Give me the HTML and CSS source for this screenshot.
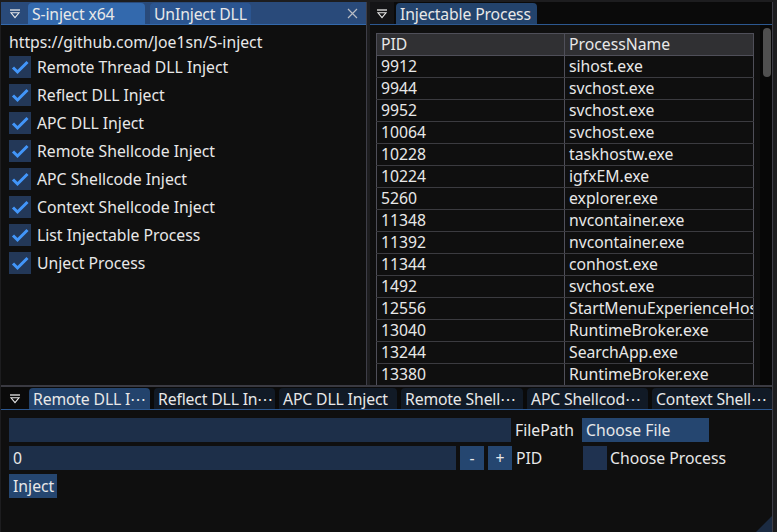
FILE: index.html
```html
<!DOCTYPE html>
<html>
<head>
<meta charset="utf-8">
<link rel="stylesheet" href="styles.css">
</head>
<body>
<div class="screen">
  <div class="top">
    <section class="win win-left">
      <div class="tabbar focused">
        <span class="menu-btn"><svg width="12" height="10" viewBox="0 0 12 10"><line x1="1" y1="1" x2="11" y2="1" stroke="#e8e8e8" stroke-width="1.3"/><polygon points="2,3.8 10,3.8 6,8.6" fill="none" stroke="#e8e8e8" stroke-width="1.1"/></svg></span>
        <span class="tab tab-active t-sinject">S-inject x64</span>
        <span class="tab tab-focused t-uninject">UnInject DLL</span>
        <span class="close"><svg width="11" height="11" viewBox="0 0 11 11"><path d="M1 1 L10 10 M10 1 L1 10" stroke="#b8bcc4" stroke-width="1.2"/></svg></span>
      </div>
      <div class="left-content">
        <div class="url">https://github.com/Joe1sn/S-inject</div>
        <div class="check"><span class="box"><svg width="22" height="22" viewBox="0 0 22 22"><polyline points="4,11.5 8.5,16 18.5,6" fill="none" stroke="#4296fa" stroke-width="3"/></svg></span><span>Remote Thread DLL Inject</span></div>
        <div class="check"><span class="box"><svg width="22" height="22" viewBox="0 0 22 22"><polyline points="4,11.5 8.5,16 18.5,6" fill="none" stroke="#4296fa" stroke-width="3"/></svg></span><span>Reflect DLL Inject</span></div>
        <div class="check"><span class="box"><svg width="22" height="22" viewBox="0 0 22 22"><polyline points="4,11.5 8.5,16 18.5,6" fill="none" stroke="#4296fa" stroke-width="3"/></svg></span><span>APC DLL Inject</span></div>
        <div class="check"><span class="box"><svg width="22" height="22" viewBox="0 0 22 22"><polyline points="4,11.5 8.5,16 18.5,6" fill="none" stroke="#4296fa" stroke-width="3"/></svg></span><span>Remote Shellcode Inject</span></div>
        <div class="check"><span class="box"><svg width="22" height="22" viewBox="0 0 22 22"><polyline points="4,11.5 8.5,16 18.5,6" fill="none" stroke="#4296fa" stroke-width="3"/></svg></span><span>APC Shellcode Inject</span></div>
        <div class="check"><span class="box"><svg width="22" height="22" viewBox="0 0 22 22"><polyline points="4,11.5 8.5,16 18.5,6" fill="none" stroke="#4296fa" stroke-width="3"/></svg></span><span>Context Shellcode Inject</span></div>
        <div class="check"><span class="box"><svg width="22" height="22" viewBox="0 0 22 22"><polyline points="4,11.5 8.5,16 18.5,6" fill="none" stroke="#4296fa" stroke-width="3"/></svg></span><span>List Injectable Process</span></div>
        <div class="check"><span class="box"><svg width="22" height="22" viewBox="0 0 22 22"><polyline points="4,11.5 8.5,16 18.5,6" fill="none" stroke="#4296fa" stroke-width="3"/></svg></span><span>Unject Process</span></div>
      </div>
    </section>
    <section class="win win-right">
      <div class="tabbar">
        <span class="menu-btn dark"><svg width="12" height="10" viewBox="0 0 12 10"><line x1="1" y1="1" x2="11" y2="1" stroke="#e8e8e8" stroke-width="1.3"/><polygon points="2,3.8 10,3.8 6,8.6" fill="none" stroke="#e8e8e8" stroke-width="1.1"/></svg></span>
        <span class="tab tab-unfocused-active t-injectable">Injectable Process</span>
      </div>
      <div class="right-content">
        <div class="table-area">
          <table class="ptable">
            <thead><tr><th class="c1">PID</th><th>ProcessName</th></tr></thead>
            <tbody>
              <tr><td>9912</td><td>sihost.exe</td></tr>
              <tr><td>9944</td><td>svchost.exe</td></tr>
              <tr><td>9952</td><td>svchost.exe</td></tr>
              <tr><td>10064</td><td>svchost.exe</td></tr>
              <tr><td>10228</td><td>taskhostw.exe</td></tr>
              <tr><td>10224</td><td>igfxEM.exe</td></tr>
              <tr><td>5260</td><td>explorer.exe</td></tr>
              <tr><td>11348</td><td>nvcontainer.exe</td></tr>
              <tr><td>11392</td><td>nvcontainer.exe</td></tr>
              <tr><td>11344</td><td>conhost.exe</td></tr>
              <tr><td>1492</td><td>svchost.exe</td></tr>
              <tr><td>12556</td><td>StartMenuExperienceHost.exe</td></tr>
              <tr><td>13040</td><td>RuntimeBroker.exe</td></tr>
              <tr><td>13244</td><td>SearchApp.exe</td></tr>
              <tr><td>13380</td><td>RuntimeBroker.exe</td></tr>
            </tbody>
          </table>
        </div>
        <div class="scrollbar"><div class="thumb"></div></div>
      </div>
    </section>
  </div>
  <div class="hsep"></div>
  <section class="win win-bottom">
    <div class="tabbar">
      <span class="menu-btn"><svg width="12" height="10" viewBox="0 0 12 10"><line x1="1" y1="1" x2="11" y2="1" stroke="#e8e8e8" stroke-width="1.3"/><polygon points="2,3.8 10,3.8 6,8.6" fill="none" stroke="#e8e8e8" stroke-width="1.1"/></svg></span>
      <span class="tab tab-unfocused-active bt1">Remote DLL I⋯</span>
      <span class="tab tab-unfocused bt2">Reflect DLL In⋯</span>
      <span class="tab tab-unfocused bt3">APC DLL Inject</span>
      <span class="tab tab-unfocused bt4">Remote Shell⋯</span>
      <span class="tab tab-unfocused bt5">APC Shellcod⋯</span>
      <span class="tab tab-unfocused bt6">Context Shell⋯</span>
    </div>
    <div class="bottom-content">
      <div class="row">
        <span class="input w-path"></span>
        <span class="label">FilePath</span>
        <span class="btn w-choose">Choose File</span>
      </div>
      <div class="row">
        <span class="input w-pid">0</span>
        <span class="btn sq">-</span>
        <span class="btn sq">+</span>
        <span class="label">PID</span>
        <span class="check2"><span class="box2"></span><span>Choose Process</span></span>
      </div>
      <div class="row">
        <span class="btn inject">Inject</span>
      </div>
    </div>
  </section>
</div>
</body>
</html>
```

FILE: styles.css
```css
html, body {
  margin: 0;
  padding: 0;
  background: #1e1e1e;
}

.screen {
  width: 777px;
  height: 532px;
  box-sizing: border-box;
  padding: 2px 4px 0 1px;
  display: flex;
  flex-direction: column;
  background: #1d1d1f;
  font-family: "Noto Sans", "Open Sans", sans-serif;
  font-size: 15.75px;
  color: #e8e8e8;
  overflow: hidden;
}

.top {
  display: flex;
  height: 383px;
  gap: 3px;
}

.win {
  background: #0f0f0f;
  display: flex;
  flex-direction: column;
  overflow: hidden;
}

.win-left {
  width: 366px;
  box-sizing: border-box;
  border-right: 1px solid #3e3e48;
}

.win-right {
  flex: 1;
  border-right: 1px solid #3e3e48;
}

.hsep {
  height: 2px;
  background: #3a3a42;
}

.win-bottom {
  flex: 1;
  position: relative;
  border-right: 1px solid #3e3e48;
}

.win-bottom::after {
  content: "";
  position: absolute;
  right: 0;
  bottom: 0;
  width: 16px;
  height: 16px;
  background: #1b2b42;
  clip-path: polygon(100% 0, 100% 100%, 0 100%);
}

/* tab bars */
.tabbar {
  height: 22px;
  flex: none;
  display: flex;
  align-items: flex-end;
  background: #0a0a0a;
  border-bottom: 1px solid #2c5890;
  padding-left: 2px;
  gap: 4px;
  box-sizing: content-box;
}

.tabbar.focused {
  background: #294a7a;
  border-bottom-color: #3369ad;
  gap: 0;
}

.menu-btn {
  width: 24px;
  height: 22px;
  display: flex;
  align-items: center;
  justify-content: center;
  align-self: stretch;
  margin-right: 1px;
}

.menu-btn svg {
  margin-top: 1px;
}

.menu-btn.dark {
  background: #141416;
  margin-left: -2px;
}

.tab {
  height: 21px;
  line-height: 20px;
  padding-top: 1px;
  padding-left: 4px;
  box-sizing: border-box;
  border-radius: 4px 4px 0 0;
  white-space: nowrap;
  overflow: hidden;
  flex: none;
  letter-spacing: -0.15px;
}

.tab-active { background: #3369ad; }
.tab-focused { background: #2b5590; }
.tab-unfocused-active { background: #23436c; }
.tab-unfocused { background: #111a26; }

.t-sinject { width: 117px; }
.t-uninject { width: 101px; margin-left: 5px; }
.t-injectable { width: 141px; margin-left: -3px; }

.bt1 { width: 121px; margin-left: -3px; }
.bt2 { width: 121px; }
.bt3 { width: 118px; }
.bt4 { width: 122px; }
.bt5 { width: 121px; }
.bt6 { width: 120px; }

.close {
  margin-left: auto;
  margin-right: 8px;
  align-self: center;
  display: flex;
}

/* left window */
.left-content {
  padding: 7px 8px 0 8px;
}

.url {
  height: 20px;
  line-height: 20px;
  margin-bottom: 4px;
}

.check {
  display: flex;
  align-items: center;
  gap: 6px;
  height: 22px;
  line-height: 22px;
  margin-bottom: 6px;
}

.box {
  width: 22px;
  height: 22px;
  background: #233858;
  display: block;
  flex: none;
}

.box svg {
  display: block;
}

/* right window */
.right-content {
  flex: 1;
  display: flex;
  min-height: 0;
}

.table-area {
  flex: 1;
  padding: 8px 6px 0 6px;
  overflow: hidden;
}

.ptable {
  width: 378px;
  border-collapse: collapse;
  table-layout: fixed;
}

.ptable th, .ptable td {
  height: 21px;
  line-height: 21px;
  padding: 0 4px;
  text-align: left;
  font-weight: normal;
  white-space: nowrap;
  overflow: hidden;
  border-top: 1px solid #3b3b40;
  border-bottom: 1px solid #3b3b40;
  border-left: 1px solid #4f4f59;
  border-right: 1px solid #4f4f59;
}

.ptable th {
  background: #303033;
  border-top-color: #4f4f59;
  border-bottom-color: #4f4f59;
}

.ptable .c1 {
  width: 179px;
}

.scrollbar {
  width: 12px;
  flex: none;
  background: #070707;
  padding-top: 3px;
  box-sizing: border-box;
}

.thumb {
  width: 8px;
  height: 49px;
  margin-left: 3px;
  border-radius: 4px;
  background: #4f4f4f;
}

/* bottom window */
.bottom-content {
  padding: 8px 8px 0 8px;
  display: flex;
  flex-direction: column;
  gap: 4px;
}

.row {
  display: flex;
  align-items: center;
  height: 24px;
  gap: 4px;
}

.input {
  height: 24px;
  line-height: 24px;
  background: #1d2f49;
  padding-left: 4px;
  box-sizing: border-box;
  flex: none;
}

.w-path { width: 502px; }
.w-pid { width: 447px; }

.label {
  width: 63px;
  flex: none;
  line-height: 24px;
}

.btn {
  height: 24px;
  line-height: 24px;
  background: #254670;
  box-sizing: border-box;
  flex: none;
}

.w-choose {
  width: 127px;
  padding-left: 4px;
}

.sq {
  width: 24px;
  text-align: center;
}

.inject {
  width: 48px;
  padding-left: 4px;
}

.check2 {
  display: flex;
  align-items: center;
  gap: 3px;
}

.box2 {
  width: 24px;
  height: 24px;
  background: #1f3250;
  display: block;
}
```
